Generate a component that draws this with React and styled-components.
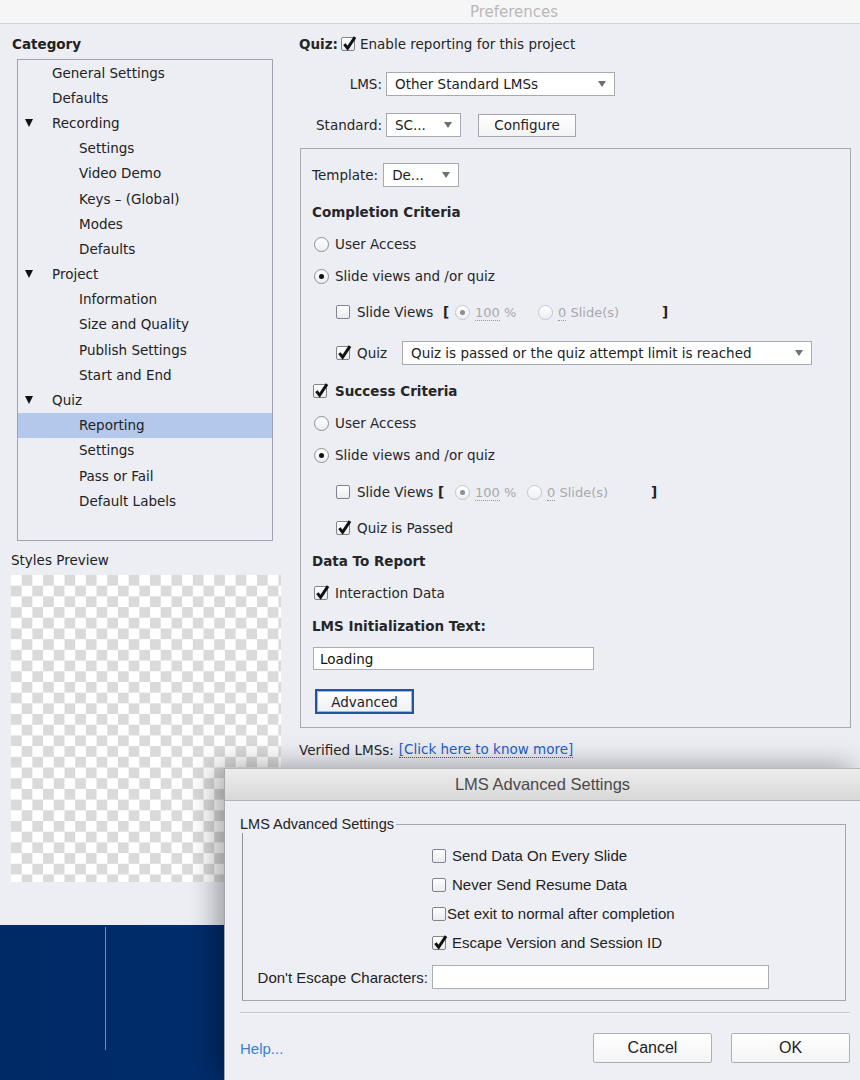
import styled, { createGlobalStyle } from 'styled-components'

const GlobalStyle = createGlobalStyle`
  html, body { margin: 0; padding: 0; }
  body {
    width: 860px;
    height: 1080px;
    overflow: hidden;
    background: #002d6c;
    font-family: 'DejaVu Sans', sans-serif;
    color: #262626;
  }
`

const categories = [
  { label: 'General Settings', level: 1 },
  { label: 'Defaults', level: 1 },
  { label: 'Recording', level: 1, open: true },
  { label: 'Settings', level: 2 },
  { label: 'Video Demo', level: 2 },
  { label: 'Keys – (Global)', level: 2 },
  { label: 'Modes', level: 2 },
  { label: 'Defaults', level: 2 },
  { label: 'Project', level: 1, open: true },
  { label: 'Information', level: 2 },
  { label: 'Size and Quality', level: 2 },
  { label: 'Publish Settings', level: 2 },
  { label: 'Start and End', level: 2 },
  { label: 'Quiz', level: 1, open: true },
  { label: 'Reporting', level: 2, selected: true },
  { label: 'Settings', level: 2 },
  { label: 'Pass or Fail', level: 2 },
  { label: 'Default Labels', level: 2 },
]

const advanced = [
  { label: 'Send Data On Every Slide', on: false },
  { label: 'Never Send Resume Data', on: false },
  { label: 'Set exit to normal after completion', on: false, tight: true },
  { label: 'Escape Version and Session ID', on: true },
]

function Check({ on, dim }) {
  return (
    <Box $dim={dim}>
      {on && (
        <svg width="16" height="16" viewBox="0 0 16 16">
          <path d="M3.4 8.2 L6.6 12.3 L14 1.2" fill="none" stroke="#111" strokeWidth="3" strokeLinejoin="miter" />
        </svg>
      )}
    </Box>
  )
}

function SlideViews({ labelW, bracketW, firstW }) {
  return (
    <Line $mt={0} $indent={24} $gap={0}>
      <Check />
      <SlideLabel $w={labelW}>Slide Views</SlideLabel>
      <Bracket $w={bracketW}>[</Bracket>
      <Opt $w={firstW}>
        <Radio $dim $on />
        <Dim><Dotted>100</Dotted> %</Dim>
      </Opt>
      <Opt $w={124}>
        <Radio $dim />
        <Dim><Dotted>0</Dotted> Slide(s)</Dim>
      </Opt>
      <Bracket>]</Bracket>
    </Line>
  )
}

export default function App() {
  return (
    <Desktop>
      <GlobalStyle />
      <Window>
        <TitleBar>Preferences</TitleBar>
        <Body>
          <LeftCol>
            <Heading $h={24}>Category</Heading>
            <Tree>
              {categories.map((c, i) => (
                <TreeRow key={i} $level={c.level} $selected={c.selected}>
                  {c.level === 1 && <Twisty>{c.open && <Triangle />}</Twisty>}
                  {c.label}
                </TreeRow>
              ))}
            </Tree>
            <PreviewLabel>Styles Preview</PreviewLabel>
            <Checker />
          </LeftCol>

          <RightCol>
            <Line $gap={3}>
              <Bold>Quiz:</Bold>
              <Check on />
              <Text style={{ marginLeft: 2 }}>Enable reporting for this project</Text>
            </Line>
            <Line $mt={16} $gap={4}>
              <FieldLabel>LMS:</FieldLabel>
              <Select $w={229}>Other Standard LMSs</Select>
            </Line>
            <Line $mt={17} $gap={4}>
              <FieldLabel>Standard:</FieldLabel>
              <Select $w={75}>SC...</Select>
              <Button $w={98} style={{ marginLeft: 13 }}>Configure</Button>
            </Line>

            <Panel>
              <Line $gap={5}>
                <Text>Template:</Text>
                <Select $w={76}>De...</Select>
              </Line>
              <Line $mt={13}><Bold>Completion Criteria</Bold></Line>
              <Line $mt={8} $indent={2}><Radio /><Text>User Access</Text></Line>
              <Line $mt={8} $indent={2}><Radio $on /><Text>Slide views and /or quiz</Text></Line>
              <Spacer $h={12} />
              <SlideViews labelW={86} bracketW={12} firstW={83} />
              <Line $mt={17} $indent={24} $gap={7}>
                <Check on />
                <Text>Quiz</Text>
                <Select $w={410} style={{ marginLeft: 8 }}>
                  Quiz is passed or the quiz attempt limit is reached
                </Select>
              </Line>
              <Line $mt={14} $indent={1} $gap={8}>
                <Check on />
                <Bold>Success Criteria</Bold>
              </Line>
              <Line $mt={8} $indent={2}><Radio /><Text>User Access</Text></Line>
              <Line $mt={8} $indent={2}><Radio $on /><Text>Slide views and /or quiz</Text></Line>
              <Spacer $h={13} />
              <SlideViews labelW={81} bracketW={17} firstW={72} />
              <Line $mt={12} $indent={24} $gap={7}>
                <Check on />
                <Text>Quiz is Passed</Text>
              </Line>
              <Line $mt={9}><Bold>Data To Report</Bold></Line>
              <Line $mt={8} $indent={2} $gap={7}>
                <Check on />
                <Text>Interaction Data</Text>
              </Line>
              <Line $mt={9}><Bold>LMS Initialization Text:</Bold></Line>
              <Line $mt={9} $h={23} $indent={1}>
                <Input $w={281}>Loading</Input>
              </Line>
              <Line $mt={19} $h={25} $indent={3}>
                <FocusButton>Advanced</FocusButton>
              </Line>
            </Panel>

            <Line $mt={10} $gap={5}>
              <Text>Verified LMSs:</Text>
              <Link>[Click here to know more]</Link>
            </Line>
          </RightCol>
        </Body>
      </Window>

      <Wallpaper>
        <Stroke />
      </Wallpaper>

      <Dialog>
        <DialogTitle>LMS Advanced Settings</DialogTitle>
        <DialogBody>
          <Group>
            <Legend>LMS Advanced Settings</Legend>
            <GroupRows>
              {advanced.map((a, i) => (
                <DlgRow key={i} $gap={a.tight ? 1 : 6}>
                  <Check on={a.on} />
                  {a.label}
                </DlgRow>
              ))}
              <EscapeRow>
                <EscapeLabel>Don't Escape Characters:</EscapeLabel>
                <Input $w={337} $h={24} />
              </EscapeRow>
            </GroupRows>
          </Group>
          <Separator />
          <Footer>
            <Help>Help...</Help>
            <DlgButton>Cancel</DlgButton>
            <DlgButton>OK</DlgButton>
          </Footer>
        </DialogBody>
      </Dialog>
    </Desktop>
  )
}

const Desktop = styled.div`
  position: relative;
  width: 860px;
  height: 1080px;
  display: flex;
  flex-direction: column;
  background: linear-gradient(90deg, #002a66 0%, #003176 60%, #002a66 100%);
`

const Window = styled.div`
  height: 925px;
  flex: none;
  background: #eceef4;
  display: flex;
  flex-direction: column;
`

const TitleBar = styled.div`
  height: 23px;
  flex: none;
  display: flex;
  align-items: center;
  justify-content: center;
  padding-left: 168px;
  background: #f6f6f6;
  border-bottom: 1px solid #d4d4d6;
  font-size: 15px;
  color: #b9b9b9;
`

const Body = styled.div`
  display: flex;
  padding-top: 8px;
`

const LeftCol = styled.div`
  width: 288px;
  flex: none;
  padding-left: 11px;
  display: flex;
  flex-direction: column;
`

const Heading = styled.div`
  height: ${({ $h }) => $h}px;
  display: flex;
  align-items: center;
  padding-left: 1px;
  font-size: 13.5px;
  font-weight: bold;
  color: #222;
`

const Tree = styled.div`
  margin: 3px 0 0 6px;
  width: 256px;
  height: 482px;
  box-sizing: border-box;
  border: 1px solid #9ca2b0;
`

const TreeRow = styled.div`
  height: 25.2px;
  display: flex;
  align-items: center;
  padding-left: ${({ $level }) => ($level === 1 ? 7 : 61)}px;
  background: ${({ $selected }) => ($selected ? '#b4c8ec' : 'transparent')};
  font-size: 13.5px;
  color: #222;
`

const Twisty = styled.span`
  width: 27px;
  flex: none;
  display: flex;
  align-items: center;
`

const Triangle = styled.span`
  width: 0;
  height: 0;
  border-top: 8px solid #111;
  border-left: 4.5px solid transparent;
  border-right: 4.5px solid transparent;
`

const PreviewLabel = styled.div`
  margin-top: 11px;
  height: 16px;
  line-height: 16px;
  font-size: 13.5px;
  color: #222;
`

const Checker = styled.div`
  margin-top: 7px;
  width: 270px;
  height: 307px;
  background-color: #fff;
  background-image: conic-gradient(#dadada 25%, #fff 0 50%, #dadada 0 75%, #fff 0);
  background-size: 21.4px 21.4px;
`

const RightCol = styled.div`
  width: 551px;
  flex: none;
  display: flex;
  flex-direction: column;
`

const Line = styled.div`
  display: flex;
  align-items: center;
  height: ${({ $h }) => $h || 24}px;
  margin-top: ${({ $mt }) => $mt || 0}px;
  padding-left: ${({ $indent }) => $indent || 0}px;
  gap: ${({ $gap }) => ($gap ?? 6)}px;
  flex: none;
`

const Spacer = styled.div`
  height: ${({ $h }) => $h}px;
  flex: none;
`

const Text = styled.span`
  font-size: 13.5px;
  color: #262626;
  white-space: nowrap;
`

const Bold = styled.span`
  font-size: 13.5px;
  font-weight: bold;
  color: #262626;
  white-space: nowrap;
`

const FieldLabel = styled.span`
  width: 83px;
  text-align: right;
  font-size: 13.5px;
  color: #262626;
`

const Select = styled.div`
  width: ${({ $w }) => $w}px;
  height: 24px;
  flex: none;
  box-sizing: border-box;
  border: 1px solid #a7aab1;
  background: #fff;
  display: flex;
  align-items: center;
  justify-content: space-between;
  padding: 0 8px 0 8px;
  font-size: 13.5px;
  color: #222;
  white-space: nowrap;

  &::after {
    content: '';
    border-top: 6px solid #6d7077;
    border-left: 4px solid transparent;
    border-right: 4px solid transparent;
  }
`

const Button = styled.div`
  width: ${({ $w }) => $w}px;
  height: 23px;
  box-sizing: border-box;
  border: 1px solid #a3a6ad;
  background: linear-gradient(#ffffff, #f3f3f5);
  display: flex;
  align-items: center;
  justify-content: center;
  font-size: 13.5px;
  color: #222;
`

const FocusButton = styled.div`
  width: 99px;
  height: 25px;
  box-sizing: border-box;
  border: 2px solid #24539f;
  box-shadow: inset 0 0 0 1px #9db5dc;
  background: linear-gradient(#ffffff, #eef0f4);
  display: flex;
  align-items: center;
  justify-content: center;
  font-size: 13.5px;
  color: #222;
`

const Panel = styled.div`
  margin: 11px 0 0 1px;
  width: 551px;
  box-sizing: border-box;
  border: 1px solid #a6aab2;
  padding: 14px 0 13px 11px;
  display: flex;
  flex-direction: column;
`

const Box = styled.span`
  position: relative;
  flex: none;
  width: 14px;
  height: 14px;
  box-sizing: border-box;
  border: 1px solid ${({ $dim }) => ($dim ? '#b9bcc3' : '#80848d')};
  border-radius: 2px;
  background: linear-gradient(#ffffff, #e9ebef);

  svg {
    position: absolute;
    left: -1px;
    top: -2px;
  }
`

const Radio = styled.span`
  flex: none;
  width: 15px;
  height: 15px;
  box-sizing: border-box;
  border-radius: 50%;
  border: 1px solid ${({ $dim }) => ($dim ? '#c5c7cc' : '#8c9099')};
  background: linear-gradient(#ffffff, #eceef2);
  display: flex;
  align-items: center;
  justify-content: center;

  &::after {
    content: '';
    display: ${({ $on }) => ($on ? 'block' : 'none')};
    width: 5px;
    height: 5px;
    border-radius: 50%;
    background: ${({ $dim }) => ($dim ? '#8d8d8d' : '#111')};
  }
`

const SlideLabel = styled.span`
  width: ${({ $w }) => $w}px;
  margin-left: 7px;
  font-size: 13.5px;
  color: #262626;
  white-space: nowrap;
`

const Bracket = styled.span`
  width: ${({ $w }) => ($w ? `${$w}px` : 'auto')};
  font-size: 13.5px;
  font-weight: bold;
  color: #222;
`

const Opt = styled.span`
  width: ${({ $w }) => $w}px;
  display: flex;
  align-items: center;
  gap: 5px;
`

const Dim = styled.span`
  font-size: 13px;
  color: #a9a9ab;
  white-space: nowrap;
`

const Dotted = styled.span`
  border-bottom: 1px dotted #9a9a9a;
`

const Input = styled.div`
  width: ${({ $w }) => $w}px;
  height: ${({ $h }) => $h || 23}px;
  box-sizing: border-box;
  border: 1px solid #aaadb3;
  background: #fff;
  display: flex;
  align-items: center;
  padding-left: 6px;
  font-size: 13.5px;
  color: #111;
`

const Link = styled.span`
  font-size: 13.5px;
  color: #1f5fc4;
  border-bottom: 1px dotted #1f5fc4;
  line-height: 15px;
`

const Wallpaper = styled.div`
  flex: 1;
  display: flex;
  padding: 2px 0 0 105px;
`

const Stroke = styled.div`
  width: 1px;
  height: 123px;
  background: #6f9c76;
`

const Dialog = styled.div`
  position: absolute;
  left: 224px;
  top: 768px;
  width: 636px;
  height: 312px;
  box-sizing: border-box;
  border-left: 1px solid #a5a7ad;
  border-top: 1px solid #b9b9bc;
  background: #eeeff4;
  box-shadow: -8px -2px 26px rgba(0, 0, 0, 0.35);
  font-family: 'Liberation Sans', Arial, sans-serif;
  color: #222;
  display: flex;
  flex-direction: column;
`

const DialogTitle = styled.div`
  height: 31px;
  flex: none;
  display: flex;
  align-items: center;
  justify-content: center;
  background: linear-gradient(#ededed, #d8d8d8);
  border-bottom: 1px solid #b3b3b6;
  font-size: 16.5px;
  color: #4a4a4a;
`

const DialogBody = styled.div`
  padding: 14px 14px 0 17px;
  display: flex;
  flex-direction: column;
`

const Group = styled.fieldset`
  margin: 0;
  padding: 0;
  border: 1px solid #a2a6af;
  border-left-color: #8d929c;
`

const Legend = styled.legend`
  margin-left: -3px;
  padding: 0 2px 0 0;
  font-size: 14.5px;
  line-height: 18px;
  color: #222;
`

const GroupRows = styled.div`
  padding: 8px 0 11px 0;
  display: flex;
  flex-direction: column;
`

const DlgRow = styled.div`
  height: 29px;
  display: flex;
  align-items: center;
  gap: ${({ $gap }) => $gap}px;
  padding-left: 189px;
  font-size: 15px;
  color: #222;
`

const EscapeRow = styled.div`
  margin-top: 8px;
  height: 24px;
  display: flex;
  align-items: center;
  gap: 4px;
`

const EscapeLabel = styled.span`
  width: 185px;
  text-align: right;
  font-size: 15px;
  color: #222;
`

const Separator = styled.div`
  margin: 11px -4px 0 -2px;
  height: 1px;
  border-top: 1px solid #c3c4c9;
  background: #f8f8fa;
`

const Footer = styled.div`
  margin: 19px -4px 0 -2px;
  display: flex;
  align-items: center;
  gap: 19px;
`

const Help = styled.span`
  flex: 1;
  font-size: 15px;
  color: #3a80d2;
`

const DlgButton = styled.div`
  width: 119px;
  height: 30px;
  box-sizing: border-box;
  border: 1px solid #adb0b6;
  border-radius: 2px;
  background: linear-gradient(#ffffff, #f4f4f6);
  display: flex;
  align-items: center;
  justify-content: center;
  font-size: 16px;
  color: #222;
`
